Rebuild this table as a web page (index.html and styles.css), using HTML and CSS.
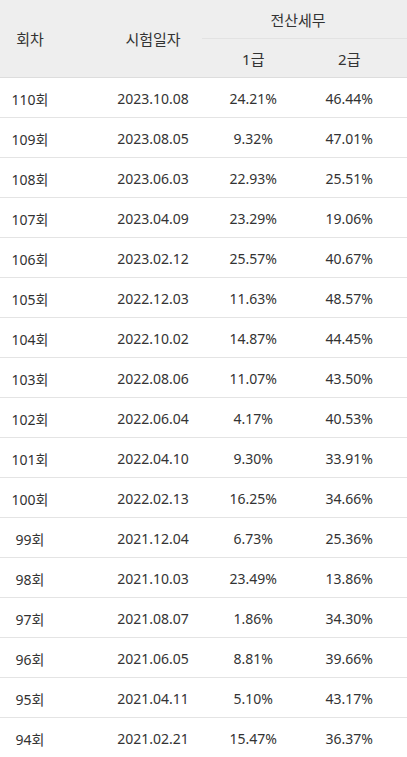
FILE: index.html
```html
<!DOCTYPE html>
<html lang="ko">
<head>
<meta charset="utf-8">
<link rel="stylesheet" href="styles.css">
</head>
<body>
<table class="pass-table">
  <thead>
    <tr class="head-top">
      <th class="c-round" rowspan="2">회차</th>
      <th class="c-date" rowspan="2">시험일자</th>
      <th class="c-group" colspan="2">전산세무</th>
    </tr>
    <tr class="head-sub">
      <th class="c-g1">1급</th>
      <th class="c-g2">2급</th>
    </tr>
  </thead>
  <tbody>
    <tr><td class="c-round">110회</td><td class="c-date">2023.10.08</td><td class="c-g1">24.21%</td><td class="c-g2">46.44%</td></tr>
    <tr><td class="c-round">109회</td><td class="c-date">2023.08.05</td><td class="c-g1">9.32%</td><td class="c-g2">47.01%</td></tr>
    <tr><td class="c-round">108회</td><td class="c-date">2023.06.03</td><td class="c-g1">22.93%</td><td class="c-g2">25.51%</td></tr>
    <tr><td class="c-round">107회</td><td class="c-date">2023.04.09</td><td class="c-g1">23.29%</td><td class="c-g2">19.06%</td></tr>
    <tr><td class="c-round">106회</td><td class="c-date">2023.02.12</td><td class="c-g1">25.57%</td><td class="c-g2">40.67%</td></tr>
    <tr><td class="c-round">105회</td><td class="c-date">2022.12.03</td><td class="c-g1">11.63%</td><td class="c-g2">48.57%</td></tr>
    <tr><td class="c-round">104회</td><td class="c-date">2022.10.02</td><td class="c-g1">14.87%</td><td class="c-g2">44.45%</td></tr>
    <tr><td class="c-round">103회</td><td class="c-date">2022.08.06</td><td class="c-g1">11.07%</td><td class="c-g2">43.50%</td></tr>
    <tr><td class="c-round">102회</td><td class="c-date">2022.06.04</td><td class="c-g1">4.17%</td><td class="c-g2">40.53%</td></tr>
    <tr><td class="c-round">101회</td><td class="c-date">2022.04.10</td><td class="c-g1">9.30%</td><td class="c-g2">33.91%</td></tr>
    <tr><td class="c-round">100회</td><td class="c-date">2022.02.13</td><td class="c-g1">16.25%</td><td class="c-g2">34.66%</td></tr>
    <tr><td class="c-round">99회</td><td class="c-date">2021.12.04</td><td class="c-g1">6.73%</td><td class="c-g2">25.36%</td></tr>
    <tr><td class="c-round">98회</td><td class="c-date">2021.10.03</td><td class="c-g1">23.49%</td><td class="c-g2">13.86%</td></tr>
    <tr><td class="c-round">97회</td><td class="c-date">2021.08.07</td><td class="c-g1">1.86%</td><td class="c-g2">34.30%</td></tr>
    <tr><td class="c-round">96회</td><td class="c-date">2021.06.05</td><td class="c-g1">8.81%</td><td class="c-g2">39.66%</td></tr>
    <tr><td class="c-round">95회</td><td class="c-date">2021.04.11</td><td class="c-g1">5.10%</td><td class="c-g2">43.17%</td></tr>
    <tr><td class="c-round">94회</td><td class="c-date">2021.02.21</td><td class="c-g1">15.47%</td><td class="c-g2">36.37%</td></tr>
  </tbody>
</table>
</body>
</html>
```

FILE: styles.css
```css
html, body {
  margin: 0;
  padding: 0;
  background: #fff;
}

body {
  font-family: "Noto Sans", "Noto Sans CJK KR", sans-serif;
  color: #333;
}

.pass-table {
  width: 407px;
  border-collapse: collapse;
  table-layout: fixed;
}

.pass-table th,
.pass-table td {
  padding: 0;
  text-align: center;
  font-weight: normal;
  white-space: nowrap;
}

.pass-table thead {
  background: #eeeeee;
}

.pass-table th {
  font-size: 15px;
  color: #333;
}

.head-top th.c-group {
  height: 38px;
  border-bottom: 1px solid #e2e2e2;
}

.head-sub th {
  height: 38px;
}

.pass-table thead tr.head-sub th,
.pass-table thead th[rowspan] {
  border-bottom: 1px solid #dddddd;
}

.pass-table td {
  height: 37px;
  padding-top: 2px;
  font-size: 14px;
  border-bottom: 1px solid #e4e4e4;
}

.c-round {
  width: 60px;
}

.c-date {
  width: 142px;
  padding-left: 44px !important;
  box-sizing: border-box;
}

.c-g1 {
  width: 96px;
}

.c-g2 {
  width: 109px;
  padding-right: 13px !important;
  box-sizing: border-box;
}

.c-group {
  padding-right: 13px !important;
}
```
